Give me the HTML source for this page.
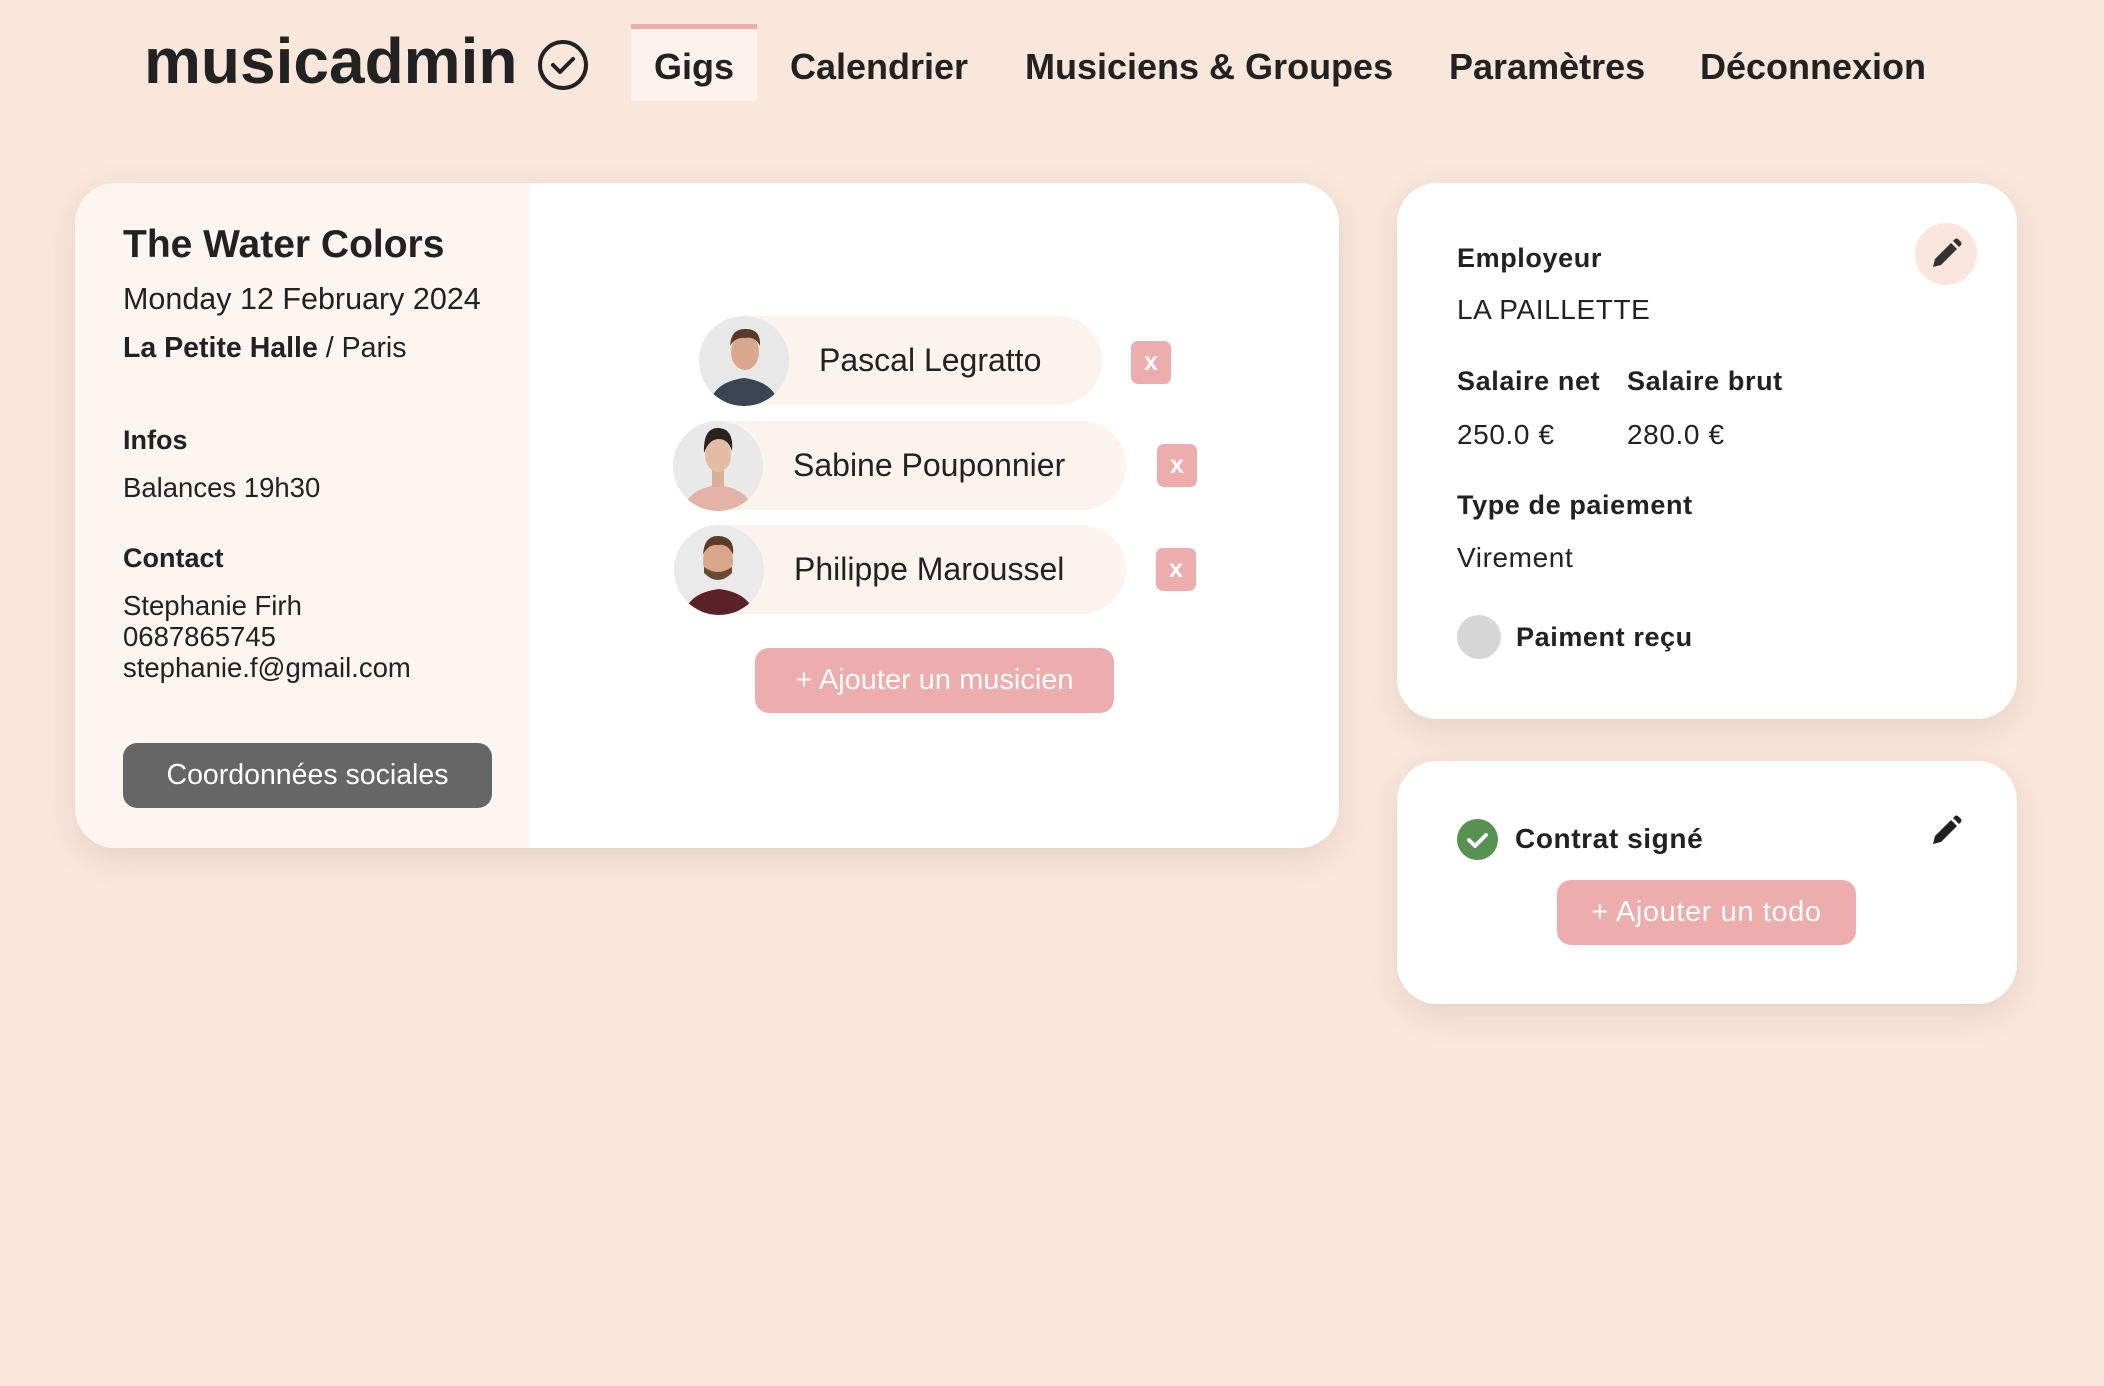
<!DOCTYPE html>
<html><head><meta charset="utf-8"><style>
*{margin:0;padding:0;box-sizing:border-box}
body{width:2104px;height:1386px;background:#f9e7dc;font-family:"Liberation Sans",Arial,sans-serif;color:#222;position:relative;overflow:hidden}
.a{position:absolute;white-space:nowrap}
.b{font-weight:bold}
.card{position:absolute;background:#fff;border-radius:40px;box-shadow:0 10px 30px rgba(150,110,90,.18)}
.pill{position:absolute;background:#fcf3ed;border-radius:45px;height:89px}
.x{position:absolute;width:40px;height:43px;background:#eeadad;border-radius:7px;color:#fff;font-size:25px;font-weight:bold;text-align:center;line-height:43px}
.btn{position:absolute;background:#edadad;border-radius:14px;color:#fff;text-align:center;font-size:29px}
.nav{font-size:36px;font-weight:bold;top:46px}
.r{letter-spacing:0.6px}
</style></head><body>
<div class="a b" style="left:144px;top:24px;font-size:64px;color:#222">musicadmin</div>
<svg class="a" style="left:536px;top:38px" width="54" height="54" viewBox="0 0 54 54"><circle cx="27" cy="27" r="23" fill="none" stroke="#222" stroke-width="4"/><path d="M17 27 L24 34 L37 21" fill="none" stroke="#222" stroke-width="4" stroke-linecap="round" stroke-linejoin="round"/></svg>
<div class="a" style="left:631px;top:24px;width:126px;height:77px;background:#fdf2ec;border-top:5px solid #eeadad"></div>
<div class="a nav" style="left:654px">Gigs</div>
<div class="a nav" style="left:790px">Calendrier</div>
<div class="a nav" style="left:1025px">Musiciens &amp; Groupes</div>
<div class="a nav" style="left:1449px">Paramètres</div>
<div class="a nav" style="left:1700px">Déconnexion</div>

<div class="card" style="left:75px;top:183px;width:1264px;height:665px;overflow:hidden">
<div style="position:absolute;left:0;top:0;width:455px;height:665px;background:#fdf5ef"></div>
</div>
<div class="a b" style="left:123px;top:223px;font-size:39px">The Water Colors</div>
<div class="a" style="left:123px;top:282px;font-size:30.5px">Monday 12 February 2024</div>
<div class="a" style="left:123px;top:332px;font-size:28.5px"><b>La Petite Halle</b> / Paris</div>
<div class="a b" style="left:123px;top:425px;font-size:27px">Infos</div>
<div class="a" style="left:123px;top:472px;font-size:27.5px">Balances 19h30</div>
<div class="a b" style="left:123px;top:543px;font-size:27px">Contact</div>
<div class="a" style="left:123px;top:590px;font-size:27.5px;line-height:31px">Stephanie Firh<br>0687865745<br>stephanie.f@gmail.com</div>
<div class="a" style="left:123px;top:743px;width:369px;height:65px;background:#666;border-radius:14px;color:#fff;font-size:28.5px;text-align:center;line-height:65px">Coordonnées sociales</div>

<div class="pill" style="left:699px;top:316px;width:403px"></div>
<div class="pill" style="left:673px;top:421px;width:453px"></div>
<div class="pill" style="left:674px;top:525px;width:452px"></div>
<svg class="a" style="left:699px;top:316px" width="90" height="90" viewBox="0 0 90 90"><defs><clipPath id="c1"><circle cx="45" cy="45" r="45"/></clipPath></defs><g clip-path="url(#c1)"><rect width="90" height="90" fill="#e8e8e8"/><path d="M10 90 Q14 66 45 62 Q76 66 80 90Z" fill="#3a4452"/><ellipse cx="46" cy="36" rx="14" ry="18" fill="#d9a88c"/><path d="M31 30 Q32 12 47 13 Q62 13 61 30 Q56 20 46 22 Q36 21 31 30Z" fill="#5a3a26"/></g></svg>
<svg class="a" style="left:673px;top:421px" width="90" height="90" viewBox="0 0 90 90"><defs><clipPath id="c2"><circle cx="45" cy="45" r="45"/></clipPath></defs><g clip-path="url(#c2)"><rect width="90" height="90" fill="#e9e9e9"/><path d="M10 90 Q14 68 45 64 Q76 68 80 90Z" fill="#e3b3a8"/><rect x="39" y="48" width="12" height="18" fill="#dcae98"/><ellipse cx="45" cy="34" rx="13" ry="17" fill="#e4bca6"/><path d="M31 32 Q30 6 46 7 Q61 8 59 30 Q55 18 46 18 Q36 18 31 32Z" fill="#2b2220"/></g></svg>
<svg class="a" style="left:674px;top:525px" width="90" height="90" viewBox="0 0 90 90"><defs><clipPath id="c3"><circle cx="45" cy="45" r="45"/></clipPath></defs><g clip-path="url(#c3)"><rect width="90" height="90" fill="#eaeaea"/><path d="M10 90 Q14 68 45 64 Q76 68 80 90Z" fill="#5a2228"/><ellipse cx="44" cy="36" rx="15" ry="19" fill="#d8a68a"/><path d="M30 48 Q44 62 58 48 L58 42 Q44 52 30 42Z" fill="#6b4a35"/><path d="M29 30 Q30 10 45 11 Q61 12 59 30 Q54 18 44 20 Q34 19 29 30Z" fill="#5c3b26"/></g></svg>
<div class="a" style="left:819px;top:342px;font-size:32px">Pascal Legratto</div>
<div class="a" style="left:793px;top:447px;font-size:32px">Sabine Pouponnier</div>
<div class="a" style="left:794px;top:551px;font-size:32px">Philippe Maroussel</div>
<div class="x" style="left:1131px;top:341px">x</div>
<div class="x" style="left:1157px;top:444px">x</div>
<div class="x" style="left:1156px;top:548px">x</div>
<div class="btn" style="left:755px;top:648px;width:359px;height:65px;line-height:65px">+ Ajouter un musicien</div>

<div class="card" style="left:1397px;top:183px;width:620px;height:536px"></div>
<div class="a" style="left:1915px;top:223px;width:62px;height:62px;border-radius:50%;background:#fae6dc"></div>
<svg class="a" style="left:1929px;top:237px" width="34" height="34" viewBox="0 0 34 34"><path d="M4 30 L6 22 L22 6 L28 12 L12 28Z" fill="#333"/><path d="M24 4 L26 2 Q27.5 1 29 2 L32 5 Q33 6.5 32 8 L30 10Z" fill="#333"/></svg>
<div class="a b r" style="left:1457px;top:243px;font-size:27px">Employeur</div>
<div class="a r" style="left:1457px;top:294px;font-size:28px">LA PAILLETTE</div>
<div class="a b r" style="left:1457px;top:366px;font-size:27px">Salaire net</div>
<div class="a b r" style="left:1627px;top:366px;font-size:27px">Salaire brut</div>
<div class="a r" style="left:1457px;top:419px;font-size:28px">250.0 €</div>
<div class="a r" style="left:1627px;top:419px;font-size:28px">280.0 €</div>
<div class="a b r" style="left:1457px;top:490px;font-size:27px">Type de paiement</div>
<div class="a r" style="left:1457px;top:542px;font-size:28px">Virement</div>
<div class="a" style="left:1457px;top:615px;width:44px;height:44px;border-radius:50%;background:#d6d6d6"></div>
<div class="a b r" style="left:1516px;top:622px;font-size:27px">Paiment reçu</div>

<div class="card" style="left:1397px;top:761px;width:620px;height:243px"></div>
<svg class="a" style="left:1457px;top:819px" width="41" height="41" viewBox="0 0 41 41"><circle cx="20.5" cy="20.5" r="20.5" fill="#579250"/><path d="M12 21 L18 27 L29 16" fill="none" stroke="#fff" stroke-width="4" stroke-linecap="round" stroke-linejoin="round"/></svg>
<div class="a b r" style="left:1515px;top:823px;font-size:28px">Contrat signé</div>
<svg class="a" style="left:1929px;top:814px" width="34" height="34" viewBox="0 0 34 34"><path d="M4 30 L6 22 L22 6 L28 12 L12 28Z" fill="#222"/><path d="M24 4 L26 2 Q27.5 1 29 2 L32 5 Q33 6.5 32 8 L30 10Z" fill="#222"/></svg>
<div class="btn r" style="left:1557px;top:880px;width:299px;height:65px;line-height:65px">+ Ajouter un todo</div>
</body></html>
